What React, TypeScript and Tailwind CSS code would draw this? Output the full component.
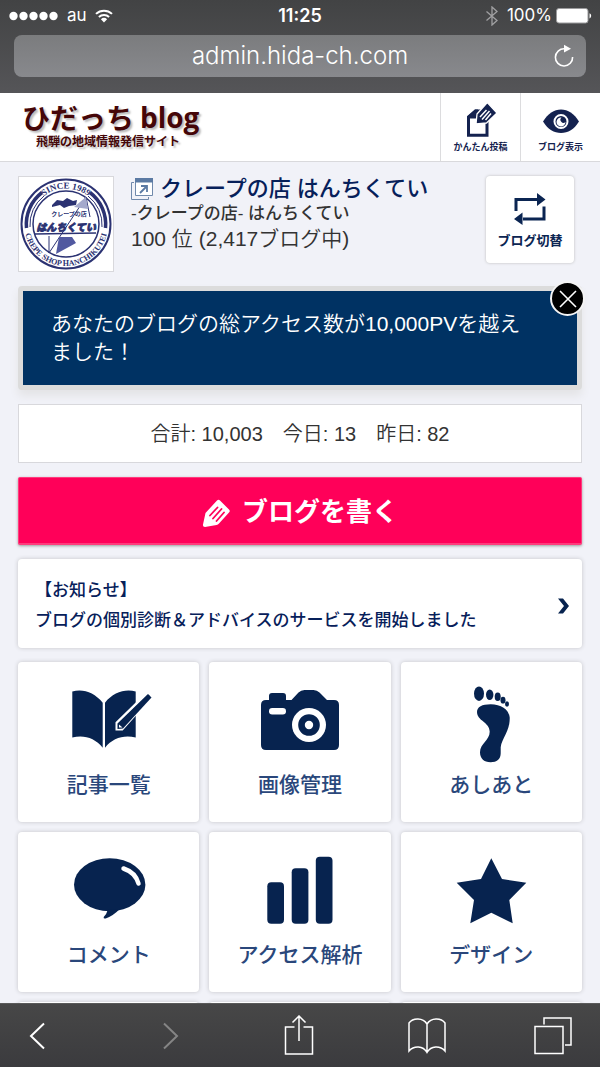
import type { ReactNode } from 'react';

const NAVY = '#07234f';

function StatusBar() {
  return (
    <div className="grid h-[35px] grid-cols-3 items-start px-2 pt-[5px] text-white">
      <div className="flex h-[22px] items-center gap-2 text-[17px]">
        <svg width="51" height="10" viewBox="0 0 51 10" fill="currentColor" aria-hidden="true">
          {[5, 15, 25, 35, 45].map((cx) => (
            <circle key={cx} cx={cx + 0.5} cy="5" r="4.2" />
          ))}
        </svg>
        <span>au</span>
        <svg width="18" height="14" viewBox="0 0 18 14" fill="none" stroke="currentColor" strokeWidth="2" aria-hidden="true">
          <path d="M1 4.9a11.6 11.6 0 0 1 16 0" />
          <path d="M3.9 8a7.4 7.4 0 0 1 10.2 0" />
          <path d="M9 13.4 5.9 10.3a4.5 4.5 0 0 1 6.2 0Z" fill="currentColor" stroke="none" />
        </svg>
      </div>
      <div className="text-center text-[18px] leading-[22px] font-semibold">11:25</div>
      <div className="flex h-[22px] items-center justify-end text-[17px]">
        <svg className="mr-2" width="14" height="20" viewBox="0 0 14 20" fill="none" stroke="#a0a0a2" strokeWidth="1.3" aria-hidden="true">
          <path d="M1.5 5.5 12 14.5 7 19V1l5 4.5L1.5 14.5" />
        </svg>
        <span className="mr-1">100%</span>
        <svg width="36" height="16" viewBox="0 0 36 16" aria-hidden="true">
          <rect x="0.5" y="0.5" width="31.5" height="14.5" rx="2.5" fill="#fff" stroke="#9b9b9d" />
          <path d="M33.5 5.2c2.2.8 2.2 4.3 0 5.2Z" fill="#fff" />
        </svg>
      </div>
    </div>
  );
}

function BrowserTop() {
  return (
    <div className="shrink-0 bg-linear-to-b from-[#424344] to-[#555558] font-[Inter,sans-serif]">
      <StatusBar />
      <div className="px-[14px] pb-4">
        <div className="relative flex h-[42px] items-center rounded-lg bg-linear-to-b from-[#7b7c7e] to-[#88898d] text-white">
          <input
            aria-label="Address"
            readOnly
            value="admin.hida-ch.com"
            className="w-full bg-transparent text-center text-[24px] font-light outline-none"
          />
          <button aria-label="Reload" className="absolute right-3 flex">
            <svg width="20" height="24" viewBox="0 0 20 24" fill="none" stroke="currentColor" strokeWidth="1.6">
              <path d="M10.5 4.8A8.6 8.6 0 1 0 18.6 13" />
              <path d="M10 .8 17 4.8 10 8.6Z" fill="currentColor" stroke="none" />
            </svg>
          </button>
        </div>
      </div>
    </div>
  );
}

function SiteHeader() {
  return (
    <header className="flex h-[69px] shrink-0 border-b border-[#d9d9dc] bg-white">
      <a href="#" className="flex-1 pt-[8px] pl-[22px] text-[#450608] [text-shadow:2px_2px_2px_#bbb]">
        <div className="flex gap-[6px] text-[28px] leading-8 font-bold">
          <span className="font-['Noto_Sans_CJK_JP',sans-serif]">ひだっち</span>
          <span className="font-['Open_Sans',sans-serif]">blog</span>
        </div>
        <div className="pl-[14px] text-[12px] leading-[18px] font-bold">飛騨の地域情報発信サイト</div>
      </a>
      <a href="#" className="flex w-20 flex-col items-center border-l border-[#dcdcde] pt-2 text-[9px] leading-3 font-bold text-[#14224f]">
        <svg width="34" height="40" viewBox="0 0 34 40" aria-hidden="true">
          <path d="M4.5 16 11.500 10H23V34.300H4.500Z" fill="none" stroke="currentColor" strokeWidth="3" />
          <path d="M3 16 11 8.500H14v9H3Z" fill="currentColor" />
          <path d="m12 23 1-10L23.300 1.500 33 12 22.500 22Z" fill="currentColor" stroke="#fff" strokeWidth="1.300" strokeLinejoin="round" />
          <path d="m16 16 6.500-7m-4.500 9.500 7.500-8.500m-4 9 5.500-6.500" stroke="#fff" strokeWidth="1.500" fill="none" />
        </svg>
        かんたん投稿
      </a>
      <a href="#" className="flex w-20 flex-col items-center border-l border-[#dcdcde] pt-2 text-[9px] leading-3 font-bold text-[#14224f]">
        <svg width="36" height="40" viewBox="0 0 36 40" aria-hidden="true">
          <path d="M0 20.500C5 12.500 11 8.500 18 8.500s13 4 18 12c-5 8-11 11.500-18 11.500S5 28.500 0 20.500Z" fill="currentColor" />
          <circle cx="18" cy="20.500" r="6.500" fill="currentColor" stroke="#fff" strokeWidth="2" />
          <path d="M18.500 16.500a3 3 0 0 0 4 4.500 4.500 4.500 0 1 1-4-4.500Z" fill="#fff" />
        </svg>
        ブログ表示
      </a>
    </header>
  );
}

function ShopEmblem() {
  return (
    <svg className="size-full" viewBox="0 0 94 94" role="img" aria-label="クレープの店 はんちくてい">
      <g fill="none" stroke="#2b3272">
        <circle cx="47" cy="47" r="44.500" strokeWidth="2" />
        <circle cx="47" cy="47" r="33" strokeWidth="1.500" />
        <path d="M7.500 51A40 40 0 0 1 23 15.500M71 15.500A40 40 0 0 1 86.500 51" strokeWidth="3.500" />
        <path d="M11 50A36 36 0 0 1 25 19M69 19A36 36 0 0 1 83 50" strokeWidth="1" />
        <path d="M67 20 30 76V59M67 20l4 20" strokeWidth="1" />
      </g>
      <path d="m40 60 13 0 4 6-20 11Z" fill="#5159a0" />
      <path d="m33 28 5-5 6 1 4-3 6 3 4-1-1 5-7 1-5 2-4-3-8 2Z" fill="#2b3272" />
      <path d="m55 30 12-10 2 12Z" fill="#a4a9cc" />
      <path id="ring-top" d="M11.500 47a35.500 35.500 0 0 1 71 0" fill="none" />
      <path id="ring-bottom" d="M5 47a42 42 0 0 0 84 0" fill="none" />
      <g fill="#2b3272" className="font-['Liberation_Serif',serif] font-bold">
        <text fontSize="9" textAnchor="middle">
          <textPath href="#ring-top" startOffset="50%">SINCE 1989</textPath>
        </text>
        <text fontSize="8" textAnchor="middle">
          <textPath href="#ring-bottom" startOffset="50%">CREPE SHOP HANCHIKUTEI</textPath>
        </text>
      </g>
      <g fill="#2b3272" className="font-['Noto_Sans_CJK_JP',sans-serif]">
        <text x="50" y="39" fontSize="6" textAnchor="middle" fontWeight="700">クレープの店</text>
        <text x="47" y="54" fontSize="10" textAnchor="middle" fontWeight="900" fontStyle="italic" stroke="#2b3272" strokeWidth="0.800">
          はんちくてい
        </text>
      </g>
      <path d="M16 57 77 56" stroke="#2b3272" strokeWidth="1.500" />
    </svg>
  );
}

function Profile() {
  return (
    <section className="flex items-start pr-2">
      <div className="size-24 shrink-0 border border-[#d8d8dc] bg-white">
        <ShopEmblem />
      </div>
      <div className="ml-[17px] flex-1 text-[#333]">
        <h1 className="flex items-center gap-[7px] text-[22px] leading-[25px] font-bold text-[#06205a]">
          <svg width="22" height="22" viewBox="0 0 22 22" aria-hidden="true">
            <path d="M4.500.500h17v17h-17Z" fill="#fff" stroke="#7089ab" />
            <path d="M4 0h18v4.500H4Z" fill="#5b7aa3" />
            <path d="M3 4.500H.500v17h17V19" fill="none" stroke="#7089ab" />
            <path d="m9 15 6-6m-5-1h6v6" fill="none" stroke="#5b7aa3" strokeWidth="1.800" />
          </svg>
          <a href="#" className="font-medium">クレープの店 はんちくてい</a>
        </h1>
        <p className="text-[17px] leading-[25px] font-medium">-クレープの店- はんちくてい</p>
        <p className="text-[21px] leading-[25px] font-[350]">100 位 (2,417ブログ中)</p>
      </div>
      <button className="flex h-[87px] w-[88px] flex-col items-center rounded bg-white pt-[17px] text-[13px] leading-5 font-bold text-[#0b2552] shadow-[0_0_3px_#bbb]">
        <svg className="mb-[6px]" width="34" height="32" viewBox="0 0 34 32" aria-hidden="true">
          <path d="M3 18V6.500h22M31 13.500V26H10" fill="none" stroke="currentColor" strokeWidth="3" />
          <path d="m24 0 8.500 6.500L24 13ZM9.500 19.500 1 26l8.500 6Z" fill="currentColor" />
        </svg>
        ブログ切替
      </button>
    </section>
  );
}

function Milestone() {
  return (
    <section className="relative rounded border-[5px] border-[#dcdcdc] bg-[#003263] py-[19px] pr-10 pl-7 text-[21px] leading-7 font-[350] text-white shadow-[0_6px_8px_#e4e4e6]">
      あなたのブログの総アクセス数が10,000PVを越えました！
      <button aria-label="閉じる" className="absolute -top-[10px] -right-2 flex size-[35px] items-center justify-center rounded-full border-2 border-[#f4f4f4] bg-black">
        <svg width="18" height="18" viewBox="0 0 18 18" stroke="#fff" strokeWidth="1.600">
          <path d="m1 1 16 16M17 1 1 17" />
        </svg>
      </button>
    </section>
  );
}

const tiles: { label: string; icon: ReactNode }[] = [
  {
    label: '記事一覧',
    icon: (
      <>
        <path d="M13.300 11.500c11-3 22 1 30.400 11.200v45C36 58 25 54.500 13.300 57.500ZM46 22.700C54 12.500 66 8.500 76.700 11.500v46C65 54.500 53.500 58 46 67.700Z" />
        <path d="M58 49V43L88 13.500q2.500-1 4.500 2.500L63 49Z" stroke="#fff" strokeWidth="3" />
        <path d="M58.500 49 58.500 43.500 89 14 92.500 17.500 64 48.500Z" />
        <path d="M60 47.500V44.500L63.500 47.500Z" fill="#fff" />
      </>
    ),
  },
  {
    label: '画像管理',
    icon: (
      <>
        <path d="M16 20h3v-4q0-3 3-3h11q3 0 3 3v4h5.500l7-7.500q2.500-2.500 6-2.500h9q3.500 0 6 2.500L77 20h7q5 0 5 5v40q0 5-5 5H16q-5 0-5-5V25q0-5 5-5Z" />
        <rect x="19" y="28" width="17" height="6.500" rx="3.200" fill="#fff" />
        <circle cx="59" cy="45" r="17" fill="#fff" />
        <circle cx="59" cy="45" r="7.500" fill="#fff" stroke={NAVY} strokeWidth="6.600" />
      </>
    ),
  },
  {
    label: 'あしあと',
    icon: (
      <>
        <ellipse cx="38" cy="13.700" rx="5" ry="7.300" />
        <ellipse cx="48.700" cy="14.700" rx="3.700" ry="5.200" />
        <ellipse cx="56.700" cy="16.700" rx="3" ry="4.300" />
        <ellipse cx="62" cy="20.200" rx="2.500" ry="3.400" />
        <ellipse cx="66" cy="24" rx="2" ry="2.700" />
        <path d="M36 32c0-5 5-7.700 13.700-7.700 10 0 18 5 19 13 .500 14-8 21-9 30v6c0 6-4 9-10 9-7 0-10.700-4-10.700-10 0-9 9.700-12 9.700-20.600C48.700 42 36 41 36 32Z" />
      </>
    ),
  },
  {
    label: 'コメント',
    icon: (
      <>
        <ellipse cx="50.700" cy="34.700" rx="35.700" ry="26.500" />
        <path d="M48.700 60q-1 4-4 7-.500 2 2 1.500 8-3 14-9.500Z" />
        <path d="M64.500 18.500q12 4 15 15" fill="none" stroke="#fff" strokeWidth="4.500" strokeLinecap="round" />
      </>
    ),
  },
  {
    label: 'アクセス解析',
    icon: (
      <>
        <rect x="17.300" y="32.300" width="16.700" height="41.400" rx="4" />
        <rect x="41.700" y="18.300" width="16.700" height="55.400" rx="4" />
        <rect x="65.800" y="6.700" width="16.700" height="67" rx="4" />
      </>
    ),
  },
  {
    label: 'デザイン',
    icon: <path d="m50.300 8.300 10.700 20.700 24.300 3.700-17 17.300 3.400 23.300-21.400-10.600-21 10.600L33 50 15.700 32.700 40 29Z" />,
  },
];

function TileGrid() {
  return (
    <nav className="grid grid-cols-3 gap-[10px]">
      {tiles.map((tile) => (
        <a
          key={tile.label}
          href="#"
          className="flex h-40 flex-col items-center gap-[6px] rounded bg-white pt-[18px] text-[21px] leading-[30px] font-medium text-[#2a477b] shadow-[0_0_4px_#c4c4c8]"
        >
          <svg width="100" height="84" viewBox="0 0 100 84" fill={NAVY} aria-hidden="true">
            {tile.icon}
          </svg>
          {tile.label}
        </a>
      ))}
      {/* next row, just peeking out above the toolbar */}
      {[0, 1, 2].map((i) => (
        <div key={i} className="h-40 rounded bg-white shadow-[0_0_4px_#c4c4c8]" />
      ))}
    </nav>
  );
}

function Toolbar() {
  return (
    <footer className="flex h-16 shrink-0 items-center justify-between border-t border-[#5a5a5a] bg-linear-to-b from-[#474747] to-[#3b3b3e] px-7 text-white">
      <button aria-label="Back">
        <svg width="18" height="28" viewBox="0 0 18 28" fill="none" stroke="currentColor" strokeWidth="2">
          <path d="M16 1.500 3 14l13 12.500" />
        </svg>
      </button>
      <button aria-label="Forward" className="ml-[42px] text-[#858585]" disabled>
        <svg width="18" height="28" viewBox="0 0 18 28" fill="none" stroke="currentColor" strokeWidth="2">
          <path d="m2 1.500 13 12.500L2 26.500" />
        </svg>
      </button>
      <button aria-label="Share" className="ml-[30px]">
        <svg width="30" height="42" viewBox="0 0 30 42" fill="none" stroke="currentColor" strokeWidth="1.500">
          <path d="M10.500 12H1.500v27h27V12h-9M15 26V1M8.500 7.500 15 1 21.500 7.500" />
        </svg>
      </button>
      <button aria-label="Bookmarks" className="ml-5">
        <svg width="38" height="38" viewBox="0 0 38 38" fill="none" stroke="currentColor" strokeWidth="1.500">
          <path d="M19 7C15 .500 5 .500 1 6v28c5-5.500 14-5.500 18 1.500C23 28.500 32 28.500 37 34V6C33 .500 23 .500 19 7Zm0 0v28.500" />
        </svg>
      </button>
      <button aria-label="Tabs" className="ml-[14px]">
        <svg width="38" height="38" viewBox="0 0 38 38" fill="none" stroke="currentColor" strokeWidth="1.500">
          <path d="M1 9.500h28v27H1ZM10 7.500V1h27v27h-6" />
        </svg>
      </button>
    </footer>
  );
}

export default function App() {
  return (
    <div className="flex h-screen flex-col overflow-hidden bg-[#f1f2f8] font-['Liberation_Sans','Noto_Sans_CJK_JP',sans-serif]">
      <BrowserTop />
      <SiteHeader />
      <main className="flex min-h-0 flex-1 flex-col gap-[14px] overflow-hidden px-[18px] pt-[14px] *:shrink-0">
        <Profile />
        <Milestone />
        <p className="border border-[#d8d8dc] bg-white pt-[15px] pb-[13px] text-center text-[20px] leading-[29px] font-[350] text-[#333]">
          合計: 10,003　今日: 13　昨日: 82
        </p>
        <button className="flex h-[68px] items-center justify-center gap-3 rounded-xs border border-b-2 border-[#ff3b7d] bg-[#ff0059] pt-1 text-[26px] font-bold text-white shadow-[0_1px_3px_#999]">
          <svg width="28" height="28" viewBox="0 0 28 28" aria-hidden="true">
            <path d="M3.500 14 15 1.500q1.500-1.500 3 0l9 9q1.500 1.500 0 3L17 24.500q-1 1-2.500 1.500L3 28Q.500 28 1 25.500Z" fill="#fff" />
            <path d="m8 16.500 7.500-8m-4.500 11 8.500-9.500m-5 12 7.500-8.500" stroke="#ff0059" strokeWidth="1.800" fill="none" strokeLinecap="round" />
          </svg>
          ブログを書く
        </button>
        <a href="#" className="flex items-center justify-between rounded bg-white pt-[17px] pr-3 pb-3 pl-[17px] text-[17px] leading-[30px] font-medium text-[#07205a] shadow-[0_0_4px_#c4c4c8]">
          <span>
            【お知らせ】
            <br />
            ブログの個別診断＆アドバイスのサービスを開始しました
          </span>
          <svg width="13" height="16" viewBox="0 0 13 16" fill={NAVY} aria-hidden="true">
            <path d="M1 .500h5l6 7.500-6 7.500H1L7 8Z" />
          </svg>
        </a>
        <TileGrid />
      </main>
      <Toolbar />
    </div>
  );
}
